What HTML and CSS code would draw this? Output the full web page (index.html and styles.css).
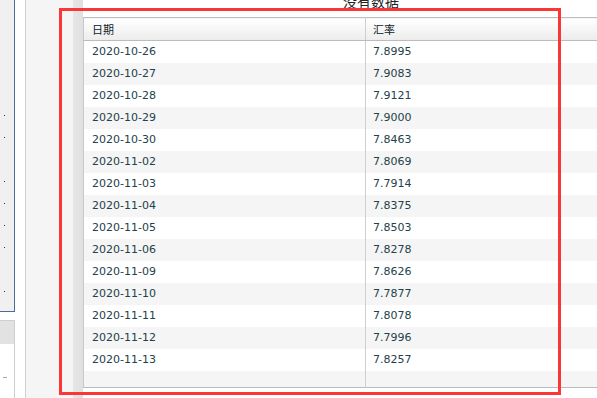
FILE: index.html
```html
<!DOCTYPE html>
<html>
<head>
<meta charset="utf-8">
<link rel="stylesheet" href="styles.css">
</head>
<body>
<div class="page">
  <div class="nav">
    <div class="nav-top">
      <div class="dots">
        <span class="dot"></span><span class="dot"></span><span class="dot off"></span><span class="dot"></span><span class="dot"></span><span class="dot"></span><span class="dot"></span><span class="dot off"></span><span class="dot"></span>
      </div>
    </div>
    <div class="nav-gap"></div>
    <div class="nav-box">
      <div class="nav-box-head"></div>
      <div class="nav-box-body"><span class="dash"></span></div>
    </div>
  </div>
  <div class="gutter"></div>
  <div class="side"></div>
  <div class="splitter"></div>
  <div class="main">
    <div class="title"><span>没有数据</span></div>
    <table class="grid">
      <thead>
        <tr><th class="c1">日期</th><th class="c2">汇率</th></tr>
      </thead>
      <tbody>
        <tr><td>2020-10-26</td><td>7.8995</td></tr>
        <tr><td>2020-10-27</td><td>7.9083</td></tr>
        <tr><td>2020-10-28</td><td>7.9121</td></tr>
        <tr><td>2020-10-29</td><td>7.9000</td></tr>
        <tr><td>2020-10-30</td><td>7.8463</td></tr>
        <tr><td>2020-11-02</td><td>7.8069</td></tr>
        <tr><td>2020-11-03</td><td>7.7914</td></tr>
        <tr><td>2020-11-04</td><td>7.8375</td></tr>
        <tr><td>2020-11-05</td><td>7.8503</td></tr>
        <tr><td>2020-11-06</td><td>7.8278</td></tr>
        <tr><td>2020-11-09</td><td>7.8626</td></tr>
        <tr><td>2020-11-10</td><td>7.7877</td></tr>
        <tr><td>2020-11-11</td><td>7.8078</td></tr>
        <tr><td>2020-11-12</td><td>7.7996</td></tr>
        <tr><td>2020-11-13</td><td>7.8257</td></tr>
        <tr class="empty"><td></td><td></td></tr>
      </tbody>
    </table>
  </div>
</div>
<div class="highlight"></div>
</body>
</html>
```

FILE: styles.css
```css
html, body {
  margin: 0;
  padding: 0;
  overflow: hidden;
  background: #fff;
  width: 597px;
  height: 398px;
}
.page {
  display: flex;
  width: 700px;
  height: 398px;
}
.nav {
  width: 15px;
  display: flex;
  flex-direction: column;
  flex: none;
}
.nav-top {
  height: 311px;
  background: #f0f0f0;
  border-right: 1px solid #4a6c9b;
  border-bottom: 1px solid #4a6c9b;
  box-sizing: content-box;
  width: 14px;
}
.dots {
  display: flex;
  flex-direction: column;
  padding-top: 104px;
}
.dot {
  height: 22px;
  position: relative;
}
.dot::after {
  content: "";
  position: absolute;
  left: 4px;
  top: 11px;
  width: 1px;
  height: 1px;
  background: #333;
}
.dot.off::after { display: none; }
.nav-gap {
  height: 8px;
  background: #fff;
}
.nav-box {
  flex: 1;
  border-top: 1px solid #cfcfcf;
  border-right: 1px solid #cfcfcf;
  width: 14px;
  display: flex;
  flex-direction: column;
}
.nav-box-head {
  height: 23px;
  background: #e2e2e2;
}
.nav-box-body {
  flex: 1;
  background: #fff;
  padding-top: 33px;
}
.dash {
  display: block;
  margin-left: 3px;
  width: 4px;
  height: 1px;
  background: #aaa;
}
.gutter {
  width: 10px;
  flex: none;
  background: #fff;
  border-right: 1px solid #d2d2d2;
}
.side {
  width: 47px;
  flex: none;
  background: #f5f5f5;
}
.splitter {
  width: 10px;
  flex: none;
  background: linear-gradient(to right, #e6e6e6, #e0e0e0);
}
.main {
  flex: none;
  width: 576px;
  background: #fff;
  display: flex;
  flex-direction: column;
}
.title {
  height: 24px;
  margin-top: -7px;
  text-align: center;
  font-family: "Noto Sans CJK SC", sans-serif;
  font-size: 14px;
  line-height: 16px;
  color: #222;
}
.grid {
  border-collapse: collapse;
  table-layout: fixed;
  width: 576px;
  font-family: "DejaVu Sans", Verdana, sans-serif;
  font-size: 11px;
  color: #23424a;
  border-left: 1px solid #c8c8c8;
  border-top: 1px solid #bcbcbc;
  border-bottom: 1px solid #bcbcbc;
}
.grid th {
  height: 22px;
  padding: 0 0 0 8px;
  text-align: left;
  font-family: "Noto Sans CJK SC", sans-serif;
  font-weight: normal;
  font-size: 11px;
  color: #0e2228;
  background: linear-gradient(to bottom, #ffffff, #ececec);
  border-bottom: 1px solid #bcbcbc;
}
.grid th.c1 { width: 273px; }
.grid td {
  height: 22px;
  padding: 0 0 0 8px;
  line-height: 22px;
}
.grid th.c1, .grid td:first-child {
  border-right: 1px solid #cfcfcf;
}
.grid th.c2, .grid td:last-child {
  padding-left: 7px;
}
.grid tbody tr:nth-child(even) td {
  background: #f5f5f5;
}
.grid tr.empty td {
  height: 16px;
  line-height: 16px;
}
.highlight {
  position: absolute;
  left: 59px;
  top: 8px;
  width: 496px;
  height: 381px;
  border: 3px solid #fa3636;
}
```
